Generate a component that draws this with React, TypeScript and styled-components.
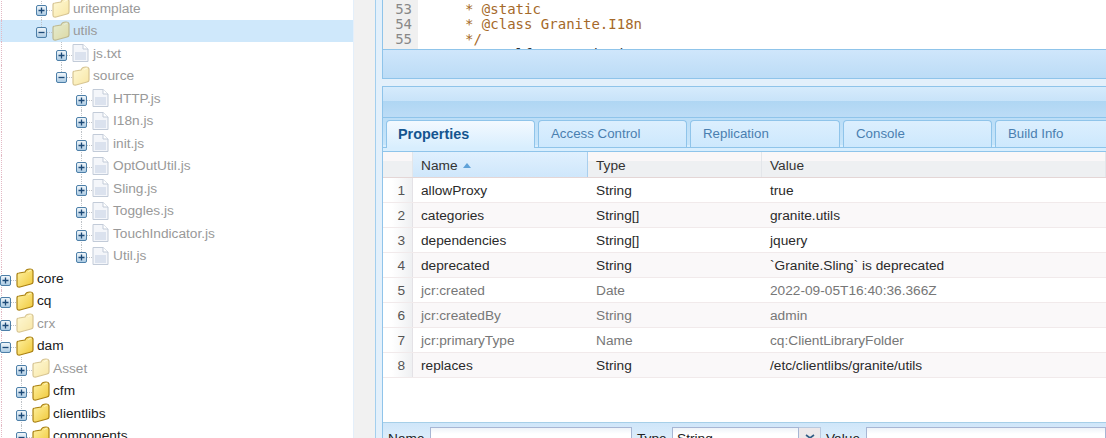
import React from "react";
import styled, { createGlobalStyle } from "styled-components";

const Global = createGlobalStyle`
  html, body { margin: 0; padding: 0; background: #fff; }
  #root { width: 1106px; height: 438px; overflow: hidden; }
`;

const Page = styled.div`
  display: flex; width: 1106px; height: 438px; overflow: hidden;
  font-family: "Liberation Sans", Arial, sans-serif; font-size: 13.7px; color: #222;
`;

const TreePane = styled.div`
  width: 353px; flex: none; height: 438px; overflow: hidden; background: #fff;
  border-right: 1px solid #e4effa;
`;
const TreeInner = styled.div`
  margin-top: -3px;
`;
const Row = styled.div<{ $sel?: boolean; $level: number }>`
  position: relative; display: flex; align-items: center; height: 22.5px;
  padding-left: ${(p) => p.$level * 20 - 4}px;
  background: ${(p) => (p.$sel ? "#cfe8fb" : "transparent")};
`;
const Guide = styled.i<{ $x: number; $half?: boolean; $pink?: boolean }>`
  position: absolute; top: 0; left: ${(p) => p.$x}px; width: 0;
  height: ${(p) => (p.$half ? "50%" : "100%")};
  border-left: 1px dotted ${(p) => (p.$pink ? "#e3b9c4" : "#bfc3c8")};
`;
const Toggle = styled.svg`
  position: relative; width: 11px; height: 11px; flex: none; margin-top: 4px;
`;
const Dash = styled.i`
  width: 5px; flex: none; height: 0; margin-top: 4px; border-top: 1px dotted #bfc3c8;
`;
const NodeIcon = styled.svg`
  width: 18px; height: 20px; flex: none; margin-right: 3px;
`;
const NodeText = styled.span<{ $dim?: boolean }>`
  color: ${(p) => (p.$dim ? "#999" : "#1a1a1a")}; line-height: 20px; margin-top: 1px;
`;

const Splitter = styled.div`
  width: 21px; flex: none; background: #f1f1f1;
`;

const Right = styled.div`
  flex: 1; min-width: 0; background: #e3f0fb; display: flex; flex-direction: column;
  border-left: 1px solid #a3cfee; padding-left: 6px;
`;
const Code = styled.div`
  height: 49px; flex: none; display: flex; border-left: 1px solid #8fc4ea; background: #fff;
  overflow: hidden; font: 14px/15px "DejaVu Sans Mono", monospace; color: #a5692a;
`;
const Gutter = styled.div`
  width: 35px; flex: none; background: #f0f0f0; color: #888; text-align: right;
  box-sizing: border-box; padding: 2px 6px 0 0;
`;
const CodeText = styled.pre`
  margin: 0; padding: 2px 0 0 47px; font: inherit; white-space: pre;
`;
const CodeDark = styled.span`
  color: #333;
`;
const Toolbar = styled.div`
  height: 30px; flex: none; box-sizing: border-box;
  border: 1px solid #8fc4ea; border-right: none;
  background: linear-gradient(#cfe6fb, #bcdcf6);
`;
const Panel = styled.div`
  flex: 1; margin-top: 7px; display: flex; flex-direction: column; min-height: 0;
  border-left: 1px solid #8fc4ea; background: #fff;
`;
const PanelHead = styled.div`
  height: 31px; flex: none; box-sizing: border-box; border-top: 1px solid #8fc4ea;
  background: linear-gradient(#d6ebfc, #c8e3f9 14px, #afd6f3 14px, #bcdcf6 100%);
`;
const TabStrip = styled.div`
  height: 35px; flex: none; box-sizing: border-box;
  padding: 2px 0 3px; border-top: 1px solid #8fc4ea; border-bottom: 1px solid #8fc4ea;
  background: linear-gradient(#bcdef7 0 3px, #c8e5fa 27px, #d8eefe 27px);
  overflow: hidden;
`;
const TabRow = styled.div`
  display: flex; gap: 3px; height: 28px; box-sizing: border-box; padding-left: 3px;
  border-bottom: 1px solid #8fc4ea;
`;
const Tab = styled.div<{ $active?: boolean; $w: number }>`
  width: ${(p) => p.$w}px; flex: none; box-sizing: border-box; height: ${(p) => (p.$active ? 28 : 27)}px;
  border: 1px solid #8fc4ea; border-bottom: none; border-radius: 4px 4px 0 0;
  padding: 5px 0 0 ${(p) => (p.$active ? 11 : 12)}px;
  font-size: ${(p) => (p.$active ? 14.4 : 13.3)}px; line-height: 16px;
  font-weight: ${(p) => (p.$active ? 700 : 400)};
  color: ${(p) => (p.$active ? "#15558f" : "#4a7fb0")};
  background: ${(p) => (p.$active ? "linear-gradient(#f3f9ff, #d8eefe)" : "linear-gradient(#dceffe, #cde8fd)")};
`;
const HeadRow = styled.div`
  display: grid; grid-template-columns: 30px 175px 174px 1fr; height: 26px; flex: none;
  box-sizing: border-box; border-bottom: 1px solid #e4d6d6;
  background: linear-gradient(#faf7f8 0 9px, #eef0f2 9px);
`;
const HeadCell = styled.div<{ $sorted?: boolean }>`
  display: flex; align-items: center; gap: 5px; padding: 1px 0 0 8px; box-sizing: border-box;
  border-right: 1px solid #e3e6ea; color: #333;
  ${(p) => p.$sorted && "background: linear-gradient(#e0f0fe, #cfe7fb); border-right: 1px solid #a9cfee;"}
`;
const SortArrow = styled.span`
  width: 0; height: 0; border-left: 4.5px solid transparent; border-right: 4.5px solid transparent;
  border-bottom: 5px solid #5fa2d8;
`;
const GridRow = styled.div<{ $alt: boolean }>`
  display: grid; grid-template-columns: 30px 175px 174px 1fr; height: 25px; box-sizing: border-box;
  border-bottom: 1px solid #f1eaeb; background: ${(p) => (p.$alt ? "#faf8f9" : "#fff")};
`;
const NumCell = styled.div`
  display: flex; align-items: center; justify-content: flex-end; padding-right: 7px; box-sizing: border-box;
  color: #555; background: linear-gradient(90deg, #fff 30%, #eff0f2); border-right: 1px solid #e4e2e6;
`;
const Cell = styled.div<{ $dim?: boolean }>`
  display: flex; align-items: center; padding-left: 8px; white-space: nowrap;
  color: ${(p) => (p.$dim ? "#777" : "#2a2a2a")};
`;
const Spacer = styled.div`
  flex: 1; background: #fff;
`;
const BottomBar = styled.div`
  height: 16px; flex: none; display: flex; align-items: flex-start; box-sizing: border-box; overflow: hidden;
  border-top: 1px solid #a6cfe8; background: linear-gradient(#cfe6f9, #dcedfb); padding-top: 4px; color: #222;
`;
const FieldLabel = styled.span<{ $w: number }>`
  width: ${(p) => p.$w}px; flex: none; box-sizing: border-box; padding: 4px 0 0 5px; line-height: 16px;
`;
const Field = styled.div<{ $w: number }>`
  width: ${(p) => p.$w}px; height: 20px; flex: none; box-sizing: border-box;
  border: 1px solid #a7b6d4; background: linear-gradient(#eef3f8, #fff 6px); padding: 3px 4px;
  line-height: 16px;
`;
const Arrow = styled.div`
  width: 22px; height: 20px; flex: none; box-sizing: border-box; border: 1px solid #b9c9de; border-left: none;
  background: #ece8ea; display: flex; justify-content: center; padding-top: 6px;
`;
const ArrowIcon = styled.svg`
  width: 10px; height: 9px; flex: none;
`;

function ToggleIcon({ open }: { open: boolean }) {
  return (
    <Toggle viewBox="0 0 11 11">
      <defs>
        <linearGradient id="tg" x1="0" y1="0" x2="0" y2="1">
          <stop offset="0" stopColor="#f4f8fb" />
          <stop offset="1" stopColor="#a9c9e2" />
        </linearGradient>
      </defs>
      <rect x="0.5" y="0.5" width="10" height="10" rx="1.5" fill="url(#tg)" stroke="#4d7fa8" />
      <path d={open ? "M2.5 5.5h6" : "M2.5 5.5h6M5.5 2.5v6"} stroke="#1c4a78" strokeWidth="1.3" />
    </Toggle>
  );
}

function FolderIcon({ dim }: { dim?: boolean }) {
  return (
    <NodeIcon viewBox="0 0 18 20" opacity={dim ? 0.45 : 1}>
      <defs>
        <linearGradient id="fg" x1="0" y1="0" x2="1" y2="1">
          <stop offset="0" stopColor="#fff3a6" />
          <stop offset="1" stopColor="#f0c838" />
        </linearGradient>
      </defs>
      <path d="M1 7 Q1 5 3 5 L9 4 Q10 1 14 1 Q16.5 1 17 3 L17 14 Q17 15.5 15 16 L4 19 Q1 19.5 1 17 Z" fill="url(#fg)" stroke="#a98011" strokeWidth="1.2" />
      <path d="M12.5 4 Q13 2 15.5 2" fill="none" stroke="#fff6c0" />
    </NodeIcon>
  );
}

function FileIcon() {
  return (
    <NodeIcon viewBox="0 0 18 20">
      <path d="M1 1.5 H11 L16 6 V18.5 H1 Z" fill="#f4f6fa" stroke="#c2cbd8" />
      <rect x="3" y="9" width="11" height="8" fill="#dbe2ee" />
      <path d="M11 1.5 V6 H16" fill="#fff" stroke="#c2cbd8" />
    </NodeIcon>
  );
}

type G = { x: number; half?: boolean; pink?: boolean };
type Node = { label: string; level: number; open?: boolean; file?: boolean; dim?: boolean; sel?: boolean; guides: G[] };
const P: G = { x: 1, pink: true };
const d1: G[] = [P, { x: 21 }];
const d4: G[] = [P, { x: 81 }];
const nodes: Node[] = [
  { label: "uritemplate", level: 2, dim: true, guides: [P, { x: 41 }] },
  { label: "utils", level: 2, open: true, dim: true, sel: true, guides: [P, { x: 41, half: true }] },
  { label: "js.txt", level: 3, file: true, dim: true, guides: [P, { x: 61 }] },
  { label: "source", level: 3, open: true, dim: true, guides: [P, { x: 61, half: true }] },
  { label: "HTTP.js", level: 4, file: true, dim: true, guides: d4 },
  { label: "I18n.js", level: 4, file: true, dim: true, guides: d4 },
  { label: "init.js", level: 4, file: true, dim: true, guides: d4 },
  { label: "OptOutUtil.js", level: 4, file: true, dim: true, guides: d4 },
  { label: "Sling.js", level: 4, file: true, dim: true, guides: d4 },
  { label: "Toggles.js", level: 4, file: true, dim: true, guides: d4 },
  { label: "TouchIndicator.js", level: 4, file: true, dim: true, guides: d4 },
  { label: "Util.js", level: 4, file: true, dim: true, guides: [P, { x: 81, half: true }] },
  { label: "core", level: 0, guides: [P] },
  { label: "cq", level: 0, guides: [P] },
  { label: "crx", level: 0, dim: true, guides: [P] },
  { label: "dam", level: 0, open: true, guides: [P] },
  { label: "Asset", level: 1, dim: true, guides: d1 },
  { label: "cfm", level: 1, guides: d1 },
  { label: "clientlibs", level: 1, guides: d1 },
  { label: "components", level: 1, open: true, guides: d1 },
];

const props: [string, string, string, boolean][] = [
  ["allowProxy", "String", "true", false],
  ["categories", "String[]", "granite.utils", false],
  ["dependencies", "String[]", "jquery", false],
  ["deprecated", "String", "`Granite.Sling` is deprecated", false],
  ["jcr:created", "Date", "2022-09-05T16:40:36.366Z", true],
  ["jcr:createdBy", "String", "admin", true],
  ["jcr:primaryType", "Name", "cq:ClientLibraryFolder", true],
  ["replaces", "String", "/etc/clientlibs/granite/utils", false],
];

const tabs: [string, number][] = [
  ["Access Control", 149],
  ["Replication", 150],
  ["Console", 149],
  ["Build Info", 150],
];

export default function App() {
  return (
    <Page>
      <Global />
      <TreePane>
        <TreeInner>
          {nodes.map((n) => (
            <Row key={n.label} $level={n.level} $sel={n.sel}>
              {n.guides.map((g) => (
                <Guide key={g.x} $x={g.x} $half={g.half} $pink={g.pink} />
              ))}
              <ToggleIcon open={!!n.open} />
              <Dash />
              {n.file ? <FileIcon /> : <FolderIcon dim={n.dim} />}
              <NodeText $dim={n.dim}>{n.label}</NodeText>
            </Row>
          ))}
        </TreeInner>
      </TreePane>
      <Splitter />
      <Right>
        <Code>
          <Gutter>
            53
            <br />
            54
            <br />
            55
          </Gutter>
          <CodeText>
            {"* @static\n* @class Granite.I18n\n*/\n"}
            <CodeDark>var self = aa, i, j;</CodeDark>
          </CodeText>
        </Code>
        <Toolbar />
        <Panel>
          <PanelHead />
          <TabStrip>
            <TabRow>
              <Tab $active $w={149}>Properties</Tab>
              {tabs.map(([t, w]) => (
                <Tab key={t} $w={w}>{t}</Tab>
              ))}
            </TabRow>
          </TabStrip>
          <HeadRow>
            <HeadCell />
            <HeadCell $sorted>Name <SortArrow /></HeadCell>
            <HeadCell>Type</HeadCell>
            <HeadCell>Value</HeadCell>
          </HeadRow>
          {props.map(([a, b, c, dim], i) => (
            <GridRow key={a} $alt={i % 2 === 1}>
              <NumCell>{i + 1}</NumCell>
              <Cell $dim={dim}>{a}</Cell>
              <Cell $dim={dim}>{b}</Cell>
              <Cell $dim={dim}>{c}</Cell>
            </GridRow>
          ))}
          <Spacer />
          <BottomBar>
            <FieldLabel $w={47}>Name</FieldLabel>
            <Field $w={202} />
            <FieldLabel $w={40}>Type</FieldLabel>
            <Field $w={127}>String</Field>
            <Arrow>
              <ArrowIcon viewBox="0 0 10 9">
                <path d="M1 1l4 3 4-3M1 5l4 3 4-3" fill="none" stroke="#2f5c85" strokeWidth="1.6" />
              </ArrowIcon>
            </Arrow>
            <FieldLabel $w={45}>Value</FieldLabel>
            <Field $w={240} />
          </BottomBar>
        </Panel>
      </Right>
    </Page>
  );
}
